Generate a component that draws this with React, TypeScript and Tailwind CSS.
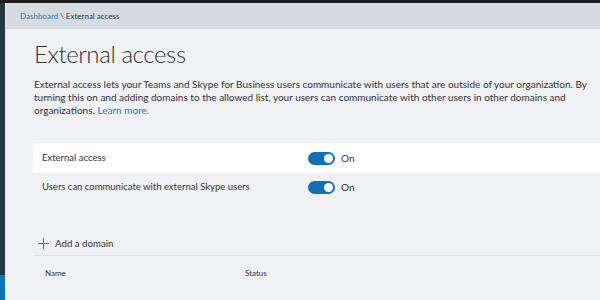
import React from "react";

function Toggle() {
  return (
    <div className="flex items-center gap-[6px]">
      <div className="w-[27px] h-[13px] rounded-full bg-[#1170b8] flex items-center justify-end pr-[2px]">
        <div className="w-[9px] h-[9px] rounded-full bg-white" />
      </div>
      <span className="text-[10px] text-[#333]">On</span>
    </div>
  );
}

export default function App() {
  return (
    <div
      className="w-[600px] h-[300px] overflow-hidden flex flex-col bg-[#eff1f5]"
      style={{ fontFamily: 'Lato, "Open Sans", sans-serif' }}
    >
      <div className="h-[3px] bg-[#1b1b1b] shrink-0" />
      <div className="flex flex-1 min-h-0">
        <div className="w-[5px] flex flex-col shrink-0">
          <div className="flex-1 bg-[#243449]" />
          <div className="h-[25px] bg-[#0e74b1]" />
        </div>
        <div className="w-[1px] bg-[#e6e9ee] shrink-0" />
        <div className="flex-1 flex flex-col min-w-0">
          <div className="h-[26px] bg-[#d6dbe1] flex items-center pl-[14px] text-[8px] shrink-0">
            <span className="text-[#2a7ab8]">Dashboard</span>
            <span className="text-[#333] whitespace-pre"> \ External access</span>
          </div>
          <div className="pl-[27px] flex flex-col">
            <h1 className="text-[24px] font-light tracking-[-0.4px] text-[#333] leading-none mt-[13px] ml-[1px]">External access</h1>
            <p className="text-[10px] leading-[13px] text-[#333] mt-[12px] ml-[1px] w-[562px] whitespace-nowrap">
              External access lets your Teams and Skype for Business users communicate with users that are outside of your organization. By
              <br />
              turning this on and adding domains to the allowed list, your users can communicate with other users in other domains and
              <br />
              organizations. <span className="text-[#2a7ab8]">Learn more.</span>
            </p>
            <div className="mt-[26px] flex flex-col text-[9.5px] text-[#333]">
              <div className="h-[30px] bg-white flex items-center pl-[9px]">
                <span className="w-[266px]">External access</span>
                <Toggle />
              </div>
              <div className="h-[29px] flex items-center pl-[9px]">
                <span className="w-[266px]">Users can communicate with external Skype users</span>
                <Toggle />
              </div>
            </div>
            <div className="mt-[34px] h-[14px] ml-[5px] flex items-center gap-[6px] text-[9.7px] text-[#333]">
              <svg width="11" height="11" viewBox="0 0 11 11">
                <path d="M5.5 0V11M0 5.5H11" stroke="#2a7ab8" strokeWidth="1" />
              </svg>
              <span>Add a domain</span>
            </div>
            <div className="mt-[5px] h-[1px] bg-[#dde0e5]" />
            <div className="flex text-[8px] leading-[11px] text-[#333] mt-[12px] pl-[12px]">
              <span className="w-[200px]">Name</span>
              <span>Status</span>
            </div>
          </div>
        </div>
      </div>
    </div>
  );
}
